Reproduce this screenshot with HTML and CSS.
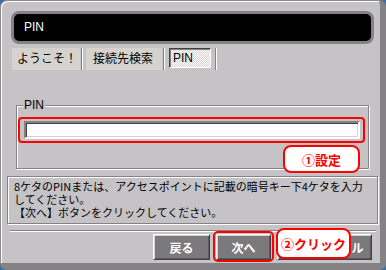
FILE: index.html
```html
<!DOCTYPE html>
<html lang="ja">
<head>
<meta charset="utf-8">
<link rel="stylesheet" href="styles.css">
</head>
<body>
<div class="window">
  <div class="title">PIN</div>
  <div class="tabs">
    <div class="tab t1">ようこそ！</div><span class="sep"></span>
    <div class="tab t2">接続先検索</div><span class="sep"></span>
    <div class="tab active">PIN</div><span class="sep"></span>
  </div>
  <div class="content">
    <fieldset class="group">
      <legend>PIN</legend>
      <div class="hl-input"><input class="pin" type="text"></div>
    </fieldset>
    <div class="message">8ケタのPINまたは、アクセスポイントに記載の暗号キー下4ケタを入力<br>してください。<br>【次へ】ボタンをクリックしてください。</div>
    <div class="rule"></div>
    <div class="buttons">
      <button class="btn back">戻る</button>
      <button class="btn next">次へ</button>
      <button class="btn cancel">キャンセル</button>
    </div>
  </div>
  <div class="callout c1">①設定</div>
  <div class="hl-next"></div>
  <div class="callout c2">②クリック</div>
</div>
</body>
</html>
```
FILE: styles.css
```css
* { box-sizing: border-box; }
html, body { margin: 0; padding: 0; }
body {
  width: 386px;
  height: 270px;
  background: #3a6ea5;
  font-family: "Liberation Sans", "Noto Sans CJK JP", sans-serif;
  overflow: hidden;
}
.window {
  position: relative;
  width: 386px;
  height: 270px;
  background: #c6c3c6;
  border-style: solid;
  border-color: #8c8a8c #848284 #848284 #8c8a8c;
  border-width: 1px 6px 7px 1px;
  border-radius: 7px;
  box-shadow: inset 1px 1px 0 #fff;
  display: flex;
  flex-direction: column;
}
.title {
  margin: 10px 6px 0 10px;
  height: 33px;
  background: #000;
  border: 3px solid #848284;
  border-radius: 8px;
  color: #fff;
  font-size: 12px;
  line-height: 27px;
  padding-left: 10px;
}
.tabs {
  display: flex;
  margin-top: 4px;
  padding-left: 11px;
  height: 22px;
  align-items: flex-start;
}
.tab {
  height: 22px;
  background: #d6d3ce;
  font-size: 12px;
  line-height: 22px;
  color: #000;
  padding-left: 5px;
}
.t1 { width: 68px; }
.t2 { width: 76px; padding-left: 7px; margin-left: 3px; }
.active {
  width: 42px;
  height: 20px;
  margin-left: 4px;
  line-height: 18px;
  padding-left: 3px;
  background: repeating-conic-gradient(#fff 0 25%, #d6d3ce 0 50%) 0 0 / 2px 2px;
  border-style: solid;
  border-width: 1px;
  border-color: #424142 #fff #fff #424142;
  box-shadow: inset 1px 1px 0 #848284;
}
.sep {
  width: 2px;
  height: 22px;
  margin-left: 1px;
  border-left: 1px solid #848284;
  border-right: 1px solid #fff;
}
.active + .sep { margin-left: 4px; }
.content {
  flex: 1;
  display: flex;
  flex-direction: column;
}
.group {
  margin: 28px 11px 0 15px;
  padding: 0 3px 25px 1px;
  border: 1px solid #848284;
  box-shadow: inset 1px 1px 0 #fff, 1px 1px 0 #fff;
  min-width: 0;
}
.group legend {
  font-size: 12px;
  line-height: 14px;
  padding: 0 1px;
  margin-left: 5px;
  background: #c6c3c6;
  color: #000;
}
.hl-input {
  margin-top: 5px;
  border: 2px solid #f00;
  border-radius: 4px;
  padding: 2px 3px 2px 4px;
}
.pin {
  display: block;
  width: 100%;
  height: 18px;
  margin: 0;
  padding: 0;
  background: #fff;
  border: 2px solid;
  border-color: #848284 #fff #fff #848284;
  box-shadow: inset 1px 1px 0 #424142, inset -1px -1px 0 #d6d3ce;
  outline: none;
}
.message {
  margin: 7px 2px 0 6px;
  height: 48px;
  border: 1px solid #848284;
  box-shadow: inset 1px 1px 0 #fff, 1px 1px 0 #fff;
  padding: 3px 6px;
  font-size: 11px;
  line-height: 13px;
  color: #000;
  font-family: "Noto Sans CJK JP", sans-serif;
  white-space: nowrap;
}
.rule {
  margin: 6px 4px 0 9px;
  height: 2px;
  border-top: 1px solid #848284;
  border-bottom: 1px solid #fff;
}
.buttons {
  display: flex;
  margin-top: 2px;
  padding-left: 152px;
  gap: 6px;
}
.btn {
  height: 26px;
  margin: 0;
  padding: 0;
  background: #7b797b;
  color: #fff;
  font-family: "Noto Sans CJK JP", sans-serif;
  font-size: 12px;
  font-weight: bold;
  border-style: solid;
  border-width: 1px;
  border-color: #fff #424142 #424142 #fff;
  box-shadow: inset 1px 1px 0 #d6d3ce, inset -1px -1px 0 #5a595a;
}
.back { width: 57px; }
.next { width: 55px; }
.cancel { width: 95px; padding-left: 18px; }
.hl-next {
  position: absolute;
  left: 212px;
  top: 230px;
  width: 61px;
  height: 31px;
  border: 2px solid #f00;
  border-radius: 5px;
}
.callout {
  position: absolute;
  background: #fff;
  border: 2px solid #f00;
  border-radius: 8px;
  color: #f00;
  font-family: "Noto Sans CJK JP", sans-serif;
  font-weight: bold;
  font-size: 13px;
  display: flex;
  align-items: center;
  justify-content: center;
}
.c1 {
  left: 282px;
  top: 144px;
  width: 77px;
  height: 28px;
}
.c2 {
  left: 275px;
  top: 227px;
  width: 75px;
  height: 31px;
}
```
